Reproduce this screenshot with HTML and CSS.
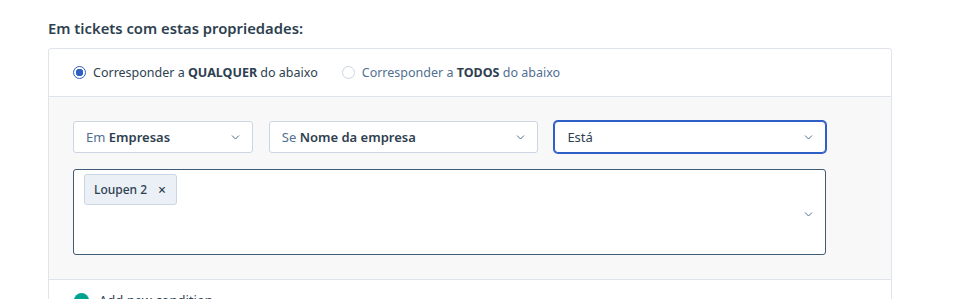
FILE: index.html
```html
<!DOCTYPE html>
<html lang="pt">
<head>
    <meta charset="UTF-8">
    <title>Propriedades do ticket</title>
    <link rel="stylesheet" href="styles.css">
</head>
<body>

<section class="filters">
    <h2 class="filters-title">Em tickets com estas propriedades:</h2>

    <div class="card">
        <div class="match-row">
            <label class="radio">
                <span class="radio-dot checked"></span>
                <span>Corresponder a <b>QUALQUER</b> do abaixo</span>
            </label>
            <label class="radio muted">
                <span class="radio-dot"></span>
                <span>Corresponder a <b>TODOS</b> do abaixo</span>
            </label>
        </div>

        <div class="condition">
            <div class="select-row">
                <div class="select sel-object">
                    <span><span class="prefix">Em</span> <b>Empresas</b></span>
                    <svg class="chev" width="9" height="6" viewBox="0 0 9 6"><path d="M1 1.5l3.5 3.5 3.5-3.5" fill="none" stroke="#516f90" stroke-width="1"/></svg>
                </div>
                <div class="select sel-prop">
                    <span><span class="prefix">Se</span> <b>Nome da empresa</b></span>
                    <svg class="chev" width="9" height="6" viewBox="0 0 9 6"><path d="M1 1.5l3.5 3.5 3.5-3.5" fill="none" stroke="#516f90" stroke-width="1"/></svg>
                </div>
                <div class="select sel-op focused">
                    <span>Está</span>
                    <svg class="chev" width="9" height="6" viewBox="0 0 9 6"><path d="M1 1.5l3.5 3.5 3.5-3.5" fill="none" stroke="#516f90" stroke-width="1"/></svg>
                </div>
            </div>

            <div class="multi">
                <div class="tags">
                    <span class="tag">Loupen 2 <span class="tag-x">&times;</span></span>
                </div>
                <svg class="chev" width="9" height="6" viewBox="0 0 9 6"><path d="M1 1.5l3.5 3.5 3.5-3.5" fill="none" stroke="#516f90" stroke-width="1"/></svg>
            </div>
        </div>

        <div class="add-row">
            <span class="add-dot"></span>
            <span>Add new condition</span>
        </div>
    </div>
</section>

</body>
</html>
```

FILE: styles.css
```css
body {
    margin: 0;
    padding: 0;
    background-color: #ffffff;
    font-family: "Noto Sans", "Open Sans", sans-serif;
    color: #33475b;
}
.filters {
    padding: 17px 73px 0 48px;
}
.filters-title {
    margin: 0 0 9px;
    font-size: 14.8px;
    font-weight: 600;
    line-height: 22px;
    color: #2e3f50;
}
.card {
    border: 1px solid #dfe3eb;
    border-radius: 3px;
}
.match-row {
    display: flex;
    align-items: center;
    gap: 24px;
    height: 47px;
    padding-left: 24px;
    border-bottom: 1px solid #dfe3eb;
}
.radio {
    display: flex;
    align-items: center;
    font-size: 12.5px;
    color: #2e3f50;
    white-space: nowrap;
}
.radio b {
    font-weight: 700;
}
.radio.muted {
    color: #516f90;
}
.radio.muted b {
    color: #2e3f50;
}
.radio-dot {
    width: 13px;
    height: 13px;
    border: 1px solid #cbd6e2;
    border-radius: 50%;
    margin-right: 7px;
    box-sizing: border-box;
    background: #ffffff;
}
.radio-dot.checked {
    border: 1px solid #2d5fc4;
    background: radial-gradient(circle, #2d5fc4 0 3.5px, #ffffff 4px);
}
.condition {
    background-color: #f8f8f8;
    padding: 24px 65px 24px 24px;
}
.select-row {
    display: flex;
    gap: 16px;
    margin-bottom: 16px;
}
.select {
    display: flex;
    align-items: center;
    justify-content: space-between;
    box-sizing: border-box;
    height: 32px;
    padding: 0 12px;
    background: #ffffff;
    border: 1px solid #cbd6e2;
    border-radius: 3px;
    font-size: 13px;
    color: #2e3f50;
}
.select b {
    font-weight: 600;
}
.select .prefix {
    color: #516f90;
}
.sel-object {
    width: 180px;
}
.sel-prop {
    width: 270px;
}
.sel-op {
    width: 272px;
}
.select.focused {
    border-color: #2d5fc4;
    border-radius: 4px;
    box-shadow: 0 0 0 1px #2d5fc4;
}
.chev {
    flex: none;
}
.multi {
    display: flex;
    align-items: center;
    justify-content: space-between;
    box-sizing: border-box;
    width: 753px;
    height: 86px;
    padding: 4px 12px 0 10px;
    background: #ffffff;
    border: 1px solid #425b76;
    border-radius: 3px;
}
.tags {
    align-self: flex-start;
}
.tag {
    display: inline-flex;
    align-items: center;
    box-sizing: border-box;
    height: 31px;
    padding: 0 10px 0 9px;
    background: #eaf0f6;
    border: 1px solid #cbd6e2;
    border-radius: 3px;
    font-size: 12px;
    font-weight: 500;
    color: #2e3f50;
}
.tag-x {
    margin-left: 11px;
    font-size: 14px;
}
.add-row {
    display: flex;
    align-items: center;
    gap: 10px;
    height: 40px;
    padding-left: 25px;
    border-top: 1px solid #dfe3eb;
    font-size: 13px;
    color: #2e3f50;
}
.add-dot {
    width: 15px;
    height: 15px;
    border-radius: 50%;
    background: #00a38d;
}
```
